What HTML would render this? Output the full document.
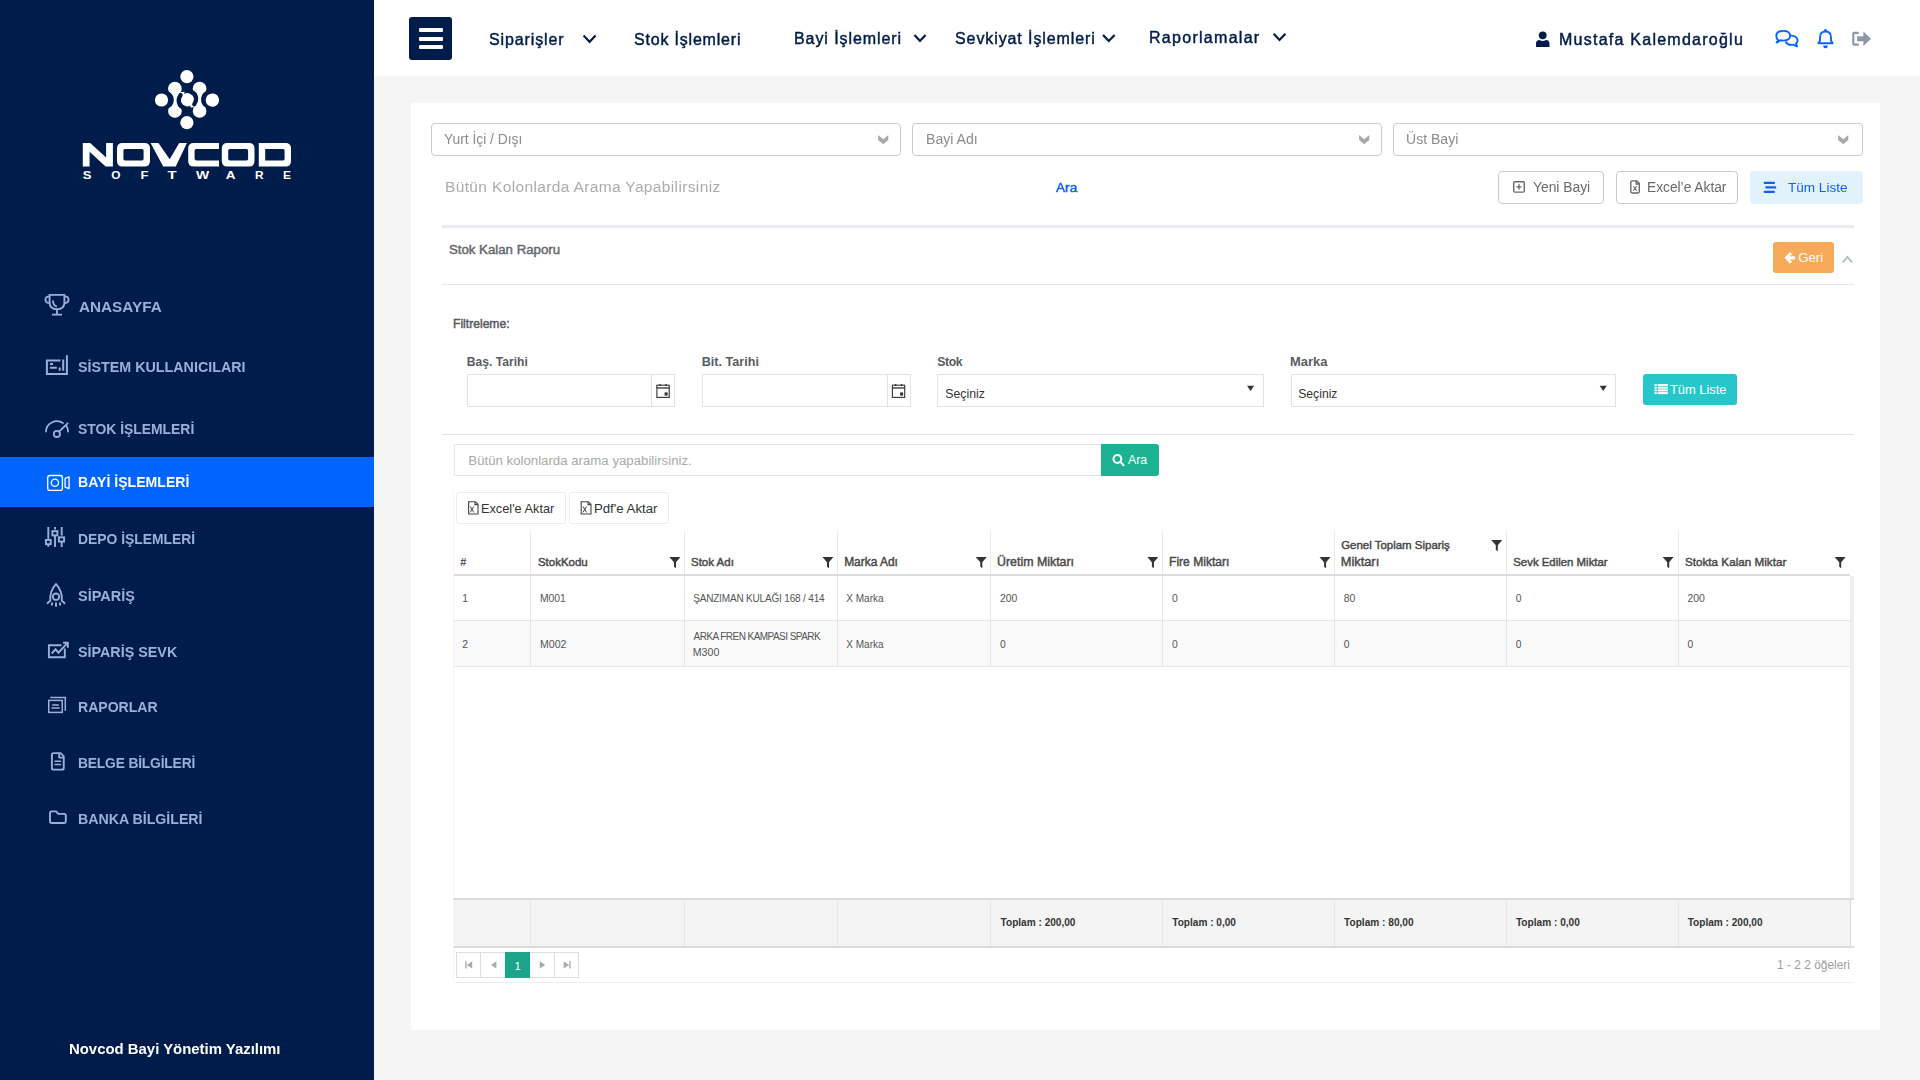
<!DOCTYPE html>
<html lang="tr">
<head>
<meta charset="utf-8">
<title>Stok Kalan Raporu</title>
<style>

*{box-sizing:border-box;margin:0;padding:0}
html,body{width:1920px;height:1080px;overflow:hidden}
body{position:relative;background:#f5f5f5;font-family:"Liberation Sans",sans-serif;color:#333}
.a{position:absolute}
.t{position:absolute;white-space:nowrap;line-height:1}
svg{position:absolute;overflow:visible}
</style>
</head>
<body>
<div class="a" style="left:0px;top:0px;width:374px;height:1080px;background:#001c4b"></div>
<div class="a" style="left:0px;top:457px;width:374px;height:50px;background:#0064ff"></div>
<div class="a" style="left:374px;top:0px;width:1546px;height:76px;background:#fff"></div>
<div class="a" style="left:411px;top:103px;width:1469px;height:927px;background:#fff"></div>
<svg style="left:0;top:0" width="374" height="200" viewBox="0 0 374 200">
<g id="mol">
<g fill="#fff">
<circle cx="186.9" cy="76.6" r="6.6"/><circle cx="186.9" cy="122.7" r="6.6"/><circle cx="212.3" cy="100" r="6.6"/>
<circle cx="174.9" cy="88.7" r="6.85"/><circle cx="199.6" cy="88.7" r="6.85"/><circle cx="174.9" cy="110.9" r="6.85"/><circle cx="199.6" cy="110.9" r="6.85"/>
<circle cx="187.4" cy="99.7" r="6.7"/>
<path d="M170 89H179.5V110.5H170Z"/><path d="M204.8 89H195.3V110.5H204.8Z"/>
<path d="M176.5 92.5L184.5 91.8L184 96.5L179.5 98.5Z"/><path d="M198.3 107L190.3 107.6L190.8 102.9L195.3 100.9Z"/>
</g>
<ellipse cx="166.8" cy="100" rx="7" ry="8.5" fill="#001c4b"/><ellipse cx="208" cy="99.4" rx="7" ry="8.5" fill="#001c4b"/>
<circle cx="161.5" cy="100" r="6.6" fill="#fff"/><circle cx="212.3" cy="100" r="6.6" fill="#fff"/>
<g fill="none" stroke="#001c4b" stroke-width="4.2" stroke-linecap="round">
<path d="M180.6 95 Q177 100.5 180 105.2 Q181.5 106.8 183.5 107.3"/>
<path d="M194.2 104.4 Q197.8 98.9 194.8 94.2 Q193.3 92.6 191.3 92.1"/>
</g>
</g>
<g fill="#fff" fill-rule="evenodd">
<path d="M82.8 166.4V143H90.2L106.1 157.6V143H112.9V166.4H105.6L89.6 151.8V166.4Z"/>
<path d="M122.5 143H144.5Q150 143 150 148.5V160.9Q150 166.4 144.5 166.4H122.5Q117 166.4 117 160.9V148.5Q117 143 122.5 143ZM125 149Q123.4 149 123.4 150.6V158.8Q123.4 160.4 125 160.4H142Q143.6 160.4 143.6 158.8V150.6Q143.6 149 142 149Z"/>
<path d="M150.6 143H158.4L169.7 159.2L179.2 143H186.9L175.8 166.4H163.2Z"/>
<path d="M219 143H193.7Q188.2 143 188.2 148.5V160.9Q188.2 166.4 193.7 166.4H219V160.4H196.4Q194.6 160.4 194.6 158.6V150.8Q194.6 149 196.4 149H219Z"/>
<path d="M227.3 143H249Q254.5 143 254.5 148.5V160.9Q254.5 166.4 249 166.4H227.3Q221.8 166.4 221.8 160.9V148.5Q221.8 143 227.3 143ZM229.8 149Q228.2 149 228.2 150.6V158.8Q228.2 160.4 229.8 160.4H246.5Q248.1 160.4 248.1 158.8V150.6Q248.1 149 246.5 149Z"/>
<path d="M258.8 143H285.5Q291 143 291 148.5V160.9Q291 166.4 285.5 166.4H258.8ZM265.2 149V160.4H283Q284.6 160.4 284.6 158.8V150.6Q284.6 149 283 149Z"/>
</g>
<g fill="#fff" font-family="Liberation Sans" font-weight="bold" font-size="10">
<text x="82.8" y="179" textLength="8.7" lengthAdjust="spacingAndGlyphs">S</text>
<text x="111.2" y="179" textLength="9.2" lengthAdjust="spacingAndGlyphs">O</text>
<text x="140.5" y="179" textLength="8" lengthAdjust="spacingAndGlyphs">F</text>
<text x="167.4" y="179" textLength="9.1" lengthAdjust="spacingAndGlyphs">T</text>
<text x="196" y="179" textLength="13.2" lengthAdjust="spacingAndGlyphs">W</text>
<text x="225.8" y="179" textLength="9.8" lengthAdjust="spacingAndGlyphs">A</text>
<text x="255" y="179" textLength="8.6" lengthAdjust="spacingAndGlyphs">R</text>
<text x="283.1" y="179" textLength="8" lengthAdjust="spacingAndGlyphs">E</text>
</g>
</svg>
<svg style="left:0;top:280px" width="80" height="560" viewBox="0 280 80 560">
<g fill="none" stroke="#9bb0d8" stroke-width="1.85" stroke-linecap="butt" stroke-linejoin="miter">
<!-- trophy -->
<path d="M49.6 294.8H64.4V302.5Q64.4 309.2 57 309.2Q49.6 309.2 49.6 302.5Z"/>
<path d="M49.6 296.3Q45.4 296.3 45.4 299.6Q45.4 303 49.8 303.2"/><path d="M64.4 296.3Q68.6 296.3 68.6 299.6Q68.6 303 64.2 303.2"/>
<path d="M57 309.2V314.6M52 314.6H62"/><path d="M53 300.5Q53 305.5 56.8 306.7"/>
</g>
<g fill="none" stroke="#9bb0d8" stroke-width="2">
<!-- sistem kullanicilari -->
<path d="M60.4 360.4H46.9V374H66.9V355.3"/><path d="M63.2 359.6V370.8M59.7 367.4V370.8M50 363.9H53M50 367.8H56.8"/>
</g>
<g fill="none" stroke="#9bb0d8" stroke-width="1.8" stroke-linecap="round">
<!-- gauge -->
<path d="M46 431.5A11 10.4 0 0 1 63 423"/><path d="M66.4 425.7A11 10.4 0 0 1 68 431.5"/>
<circle cx="56.9" cy="433.9" r="3.1"/><path d="M59.1 431.7L67.6 423.3"/>
</g>
<g fill="none" stroke="#fff" stroke-width="1.3">
<!-- camera -->
<rect x="47.7" y="475.5" width="14.7" height="14.9" rx="2.2"/><circle cx="54.9" cy="482.7" r="3.6"/>
<path d="M65.1 478.4L69.1 476.9V488.7L65.1 487.2Z" stroke-linejoin="round"/>
</g>
<g fill="none" stroke="#9bb0d8" stroke-width="1.9">
<!-- sliders -->
<path d="M48.3 527V538.7M48.3 545V546.8M55 527V529.5M55 536V546.9M61.7 527V535.5M61.7 542V546.9"/>
<rect x="45.9" y="539.9" width="4.8" height="4.3"/><rect x="52.4" y="531.1" width="5" height="4.3"/><rect x="58.9" y="537.3" width="5.2" height="4.3"/>
</g>
<g fill="none" stroke="#9bb0d8" stroke-width="1.9">
<!-- rocket -->
<path d="M47 603.8L50.3 600.6Q49.5 591 56 584.2Q62.5 591 61.8 600.6L65.1 603.8"/>
<circle cx="56" cy="596.7" r="3.2"/>
<path d="M52 602.4V605.6M56 602.6V606.8M60 602.4V605.6"/>
</g>
<g fill="none" stroke="#9bb0d8" stroke-width="1.9">
<!-- chart -->
<path d="M61.4 645.3H48.9V657.3H64.8V648.5"/>
<path d="M51.7 653.5L55.6 649.3L58.4 652.7L67.3 643.2"/><path d="M63.1 642.7H67.8V647.7"/>
</g>
<g fill="none" stroke="#9bb0d8" stroke-width="1.5">
<!-- raporlar -->
<path d="M50.3 697.4H65.3V710.7"/><rect x="48.75" y="700.4" width="13.5" height="12"/>
<path d="M52.2 705H58.9M51.4 708H59.7"/>
</g>
<g fill="none" stroke="#9bb0d8" stroke-width="1.9" stroke-linejoin="round">
<!-- belge -->
<path d="M60.6 753.1H53.6Q51.9 753.1 51.9 754.8V767.9Q51.9 769.6 53.6 769.6H62Q63.75 769.6 63.75 767.9V756.3Z"/>
<path d="M59.2 753.2V757.6H63.6"/><path d="M54.4 761.3H61.1M54.4 764.5H61.1" stroke-width="1.5"/>
</g>
<g fill="none" stroke="#9bb0d8" stroke-width="1.9" stroke-linejoin="round">
<!-- folder -->
<path d="M50 813.2Q50 811.4 51.8 811.4H56.1L58.3 813.9H64Q65.8 813.9 65.8 815.7V821.2Q65.8 823 64 823H51.8Q50 823 50 821.2Z"/>
</g>
</svg>
<div class="a" style="left:409px;top:17px;width:43px;height:43px;background:#001c4b;border-radius:3px"></div>
<div class="a" style="left:419px;top:28px;width:24px;height:4px;background:#fff;border-radius:1px"></div>
<div class="a" style="left:419px;top:36.5px;width:24px;height:4.0px;background:#fff;border-radius:1px"></div>
<div class="a" style="left:419px;top:45px;width:24px;height:4px;background:#fff;border-radius:1px"></div>
<svg style="left:0;top:0" width="1920" height="76" viewBox="0 0 1920 76">
<g fill="none" stroke="#001c4b" stroke-width="2.2" stroke-linecap="square">
<path d="M584.4 36.4L589.6 41.8L594.8 36.4"/>
<path d="M915.2 35.7L920 40.9L924.8 35.7"/>
<path d="M1103.8 35.7L1108.8 40.9L1113.8 35.7"/>
<path d="M1274.4 34.6L1279.5 39.9L1284.6 34.6"/>
</g>
<g fill="#001c4b">
<circle cx="1542.7" cy="35.3" r="3.9"/>
<path d="M1536 46.9V43.8Q1536 40.1 1539.6 40.1Q1541 41 1542.7 41Q1544.4 41 1545.9 40.1Q1549.5 40.1 1549.5 43.8V46.9Z"/>
</g>
<g fill="none" stroke="#0d62ff" stroke-width="1.9" stroke-linejoin="round">
<path d="M1778.2 40.2Q1776.3 38.5 1776.3 35.8Q1776.3 30.9 1783.2 30.9Q1790.1 30.9 1790.1 35.8Q1790.1 40.6 1783.2 40.6Q1781.8 40.6 1780.5 40.3L1776.6 42.6Z"/>
<path d="M1790.3 35.4Q1797.6 36 1797.6 40.6Q1797.6 42.4 1796 43.5L1797 46.4L1793.2 44.7Q1792.3 44.9 1791.2 44.9Q1787.6 44.9 1785.6 41.9"/>
<path d="M1825.5 31.5Q1820 31.5 1820 37.5V40.5L1818.4 43.3H1832.6L1831 40.5V37.5Q1831 31.5 1825.5 31.5Z"/>
</g>
<g fill="#0d62ff"><circle cx="1825.5" cy="30.2" r="1.3"/><path d="M1823 45.6H1828Q1827.6 48.3 1825.5 48.3Q1823.4 48.3 1823 45.6Z"/></g>
<g fill="#8e97a8">
<path d="M1858.8 31.7H1854.2Q1852.2 31.7 1852.2 33.7V43.8Q1852.2 45.8 1854.2 45.8H1858.8V43.6H1854.4V33.9H1858.8Z"/>
<path d="M1857.1 36.3H1863.4V31.5L1870.9 38.8L1863.4 46.1V41.2H1857.1Z"/>
</g>
</svg>
<div class="a" style="left:431px;top:123px;width:470px;height:33px;border:1px solid #cbcbcb;border-radius:4px;background:#fff"></div>
<div class="a" style="left:912px;top:123px;width:470px;height:33px;border:1px solid #cbcbcb;border-radius:4px;background:#fff"></div>
<div class="a" style="left:1393px;top:123px;width:470px;height:33px;border:1px solid #cbcbcb;border-radius:4px;background:#fff"></div>
<svg style="left:0;top:0" width="1920" height="300" viewBox="0 0 1920 300"><g fill="#a9a9a9"><path d="M878.1 135L883.2 139.2L888.3000000000001 135V140L883.2 144.2L878.1 140Z"/><path d="M1359.1 135L1364.1999999999998 139.2L1369.3 135V140L1364.1999999999998 144.2L1359.1 140Z"/><path d="M1838.1 135L1843.1999999999998 139.2L1848.3 135V140L1843.1999999999998 144.2L1838.1 140Z"/></g></svg>
<div class="a" style="left:1498px;top:171px;width:106px;height:33px;border:1px solid #c9c9c9;border-radius:4px"></div>
<div class="a" style="left:1616px;top:171px;width:122px;height:33px;border:1px solid #c9c9c9;border-radius:4px"></div>
<div class="a" style="left:1750px;top:171px;width:113px;height:33px;background:#e1f2fc;border-radius:4px"></div>
<svg style="left:0;top:0" width="1920" height="300" viewBox="0 0 1920 300">
<g fill="none" stroke="#6a6a6a" stroke-width="1.4">
<rect x="1513.7" y="181.7" width="10.6" height="10.4" rx="1"/><path d="M1519 184.3V189.5M1516.4 186.9H1521.6"/>
<path d="M1636.7 180.9H1632.2Q1630.8 180.9 1630.8 182.3V191.6Q1630.8 193 1632.2 193H1637.8Q1639.3 193 1639.3 191.6V183.4Z"/><path d="M1636.2 181V184H1639.2"/>
<path d="M1633.4 186.2L1636.6 190.6M1636.6 186.2L1633.4 190.6" stroke-width="1.1"/>
</g>
<g fill="#1160fb">
<rect x="1763.8" y="181.8" width="11" height="2.2" rx="0.5"/><rect x="1765.4" y="186.3" width="10.8" height="2.2" rx="0.5"/><rect x="1763.8" y="190.7" width="11" height="2.2" rx="0.5"/>
</g>
</svg>
<div class="a" style="left:442px;top:225px;width:1412px;height:3px;background:#e8ecf1"></div>
<div class="a" style="left:442px;top:284px;width:1412px;height:1px;background:#e6e6e6"></div>
<div class="a" style="left:1773px;top:241.5px;width:61px;height:31.5px;background:#f6aa58;border-radius:3px"></div>
<svg style="left:0;top:0" width="1920" height="600" viewBox="0 0 1920 600">
<g fill="#fff"><path d="M1784.4 257.8L1790 252L1792.3 254.2L1789.4 256.3H1795V259.4H1789.4L1792.3 261.5L1790 263.7Z"/></g>
<path d="M1842.8 262.4L1847.4 257L1852 262.4" fill="none" stroke="#b8bec6" stroke-width="1.9"/>
</g>
</svg>
<div class="a" style="left:467px;top:374px;width:208px;height:33px;border:1px solid #e2e2e2"></div>
<div class="a" style="left:650.5px;top:374px;width:1.0px;height:33px;background:#e2e2e2"></div>
<div class="a" style="left:702px;top:374px;width:208.5px;height:33px;border:1px solid #e2e2e2"></div>
<div class="a" style="left:886.5px;top:374px;width:1.0px;height:33px;background:#e2e2e2"></div>
<div class="a" style="left:937px;top:374px;width:326.5px;height:33px;border:1px solid #e2e2e2"></div>
<div class="a" style="left:1290.5px;top:374px;width:325.0px;height:33px;border:1px solid #e2e2e2"></div>
<div class="a" style="left:1643px;top:374px;width:94px;height:31px;background:#26c6ca;border-radius:3px"></div>
<svg style="left:0;top:0" width="1920" height="600" viewBox="0 0 1920 600">
<g fill="none" stroke="#333" stroke-width="1.1">
<rect x="656.9" y="385.2" width="12.3" height="12.2"/><rect x="892.4" y="385.2" width="12.3" height="12.2"/>
</g>
<g fill="#333">
<rect x="656.6" y="387.3" width="13" height="1.3"/><rect x="892.1" y="387.3" width="13" height="1.3"/>
<rect x="659.4" y="384" width="1.4" height="2"/><rect x="665.4" y="384" width="1.4" height="2"/>
<rect x="894.9" y="384" width="1.4" height="2"/><rect x="900.9" y="384" width="1.4" height="2"/>
<rect x="664.6" y="392.4" width="3" height="3.2"/><rect x="900.1" y="392.4" width="3" height="3.2"/>
<path d="M1247 385.8H1254.1L1250.55 391.1Z"/><path d="M1599.7 385.8H1606.8L1603.25 391.1Z"/>
</g>
<g fill="#fff">
<rect x="1654.5" y="384" width="2.2" height="2"/><rect x="1657.6" y="384" width="10.2" height="2"/>
<rect x="1654.5" y="386.7" width="2.2" height="2"/><rect x="1657.6" y="386.7" width="10.2" height="2"/>
<rect x="1654.5" y="389.4" width="2.2" height="2"/><rect x="1657.6" y="389.4" width="10.2" height="2"/>
<rect x="1654.5" y="392.1" width="2.2" height="2"/><rect x="1657.6" y="392.1" width="10.2" height="2"/>
</g>
</svg>
<div class="a" style="left:442px;top:434px;width:1412px;height:1px;background:#e4e4e4"></div>
<div class="a" style="left:453px;top:489px;width:1px;height:493px;background:#f5f5f5"></div>
<div class="a" style="left:454px;top:444px;width:647px;height:31.5px;border:1px solid #e6e6e6;border-right:none"></div>
<div class="a" style="left:1101px;top:444px;width:58px;height:31.5px;background:#1bb394;border-radius:0 3px 3px 0"></div>
<div class="a" style="left:456px;top:492px;width:109.5px;height:31.5px;border:1px solid #ebebeb;border-radius:3px"></div>
<div class="a" style="left:569px;top:492px;width:99.5px;height:31.5px;border:1px solid #ebebeb;border-radius:3px"></div>
<svg style="left:0;top:0" width="1920" height="600" viewBox="0 0 1920 600">
<g fill="none" stroke="#fff" stroke-width="2">
<circle cx="1117.4" cy="459" r="3.9"/><path d="M1120.3 461.9L1123.6 465.2" stroke-linecap="round"/>
</g>
<g fill="none" stroke="#444" stroke-width="1.1">
<path d="M475.3 501.8H468.6V514H478V504.3Z"/><path d="M475 501.9V504.6H477.8"/>
<path d="M470.2 506.5L473.8 512.4M473.8 506.5L470.2 512.4" stroke-width="1"/>
<path d="M588.3 501.8H581.2V514H591V504.3Z"/><path d="M588 501.9V504.6H590.8"/>
<path d="M583 506.5L586.6 512.4M586.6 506.5L583 512.4" stroke-width="1"/>
</g>
</svg>
<div class="a" style="left:530px;top:531px;width:1px;height:43px;background:#e8e8e8"></div>
<div class="a" style="left:684px;top:531px;width:1px;height:43px;background:#e8e8e8"></div>
<div class="a" style="left:837px;top:531px;width:1px;height:43px;background:#e8e8e8"></div>
<div class="a" style="left:990px;top:531px;width:1px;height:43px;background:#e8e8e8"></div>
<div class="a" style="left:1162px;top:531px;width:1px;height:43px;background:#e8e8e8"></div>
<div class="a" style="left:1334px;top:531px;width:1px;height:43px;background:#e8e8e8"></div>
<div class="a" style="left:1506px;top:531px;width:1px;height:43px;background:#e8e8e8"></div>
<div class="a" style="left:1678px;top:531px;width:1px;height:43px;background:#e8e8e8"></div>
<div class="a" style="left:454px;top:573.5px;width:1396px;height:2.0px;background:#dcdcdc"></div>
<div class="a" style="left:454px;top:621px;width:1396px;height:45px;background:#f9f9f9"></div>
<div class="a" style="left:454px;top:620px;width:1396px;height:1px;background:#e6e6e6"></div>
<div class="a" style="left:454px;top:666px;width:1396px;height:1px;background:#e6e6e6"></div>
<div class="a" style="left:530px;top:575.5px;width:1px;height:91.0px;background:#e6e6e6"></div>
<div class="a" style="left:684px;top:575.5px;width:1px;height:91.0px;background:#e6e6e6"></div>
<div class="a" style="left:837px;top:575.5px;width:1px;height:91.0px;background:#e6e6e6"></div>
<div class="a" style="left:990px;top:575.5px;width:1px;height:91.0px;background:#e6e6e6"></div>
<div class="a" style="left:1162px;top:575.5px;width:1px;height:91.0px;background:#e6e6e6"></div>
<div class="a" style="left:1334px;top:575.5px;width:1px;height:91.0px;background:#e6e6e6"></div>
<div class="a" style="left:1506px;top:575.5px;width:1px;height:91.0px;background:#e6e6e6"></div>
<div class="a" style="left:1678px;top:575.5px;width:1px;height:91.0px;background:#e6e6e6"></div>
<div class="a" style="left:1850px;top:575.5px;width:4px;height:322.5px;background:#efefef"></div>
<div class="a" style="left:454px;top:898px;width:1400px;height:2px;background:#dadada"></div>
<div class="a" style="left:454px;top:900px;width:1396px;height:45.5px;background:#f4f4f4"></div>
<div class="a" style="left:1850px;top:900px;width:1px;height:45.5px;background:#d8d8d8"></div>
<div class="a" style="left:530px;top:900px;width:1px;height:45.5px;background:#e6e6e6"></div>
<div class="a" style="left:684px;top:900px;width:1px;height:45.5px;background:#e6e6e6"></div>
<div class="a" style="left:837px;top:900px;width:1px;height:45.5px;background:#e6e6e6"></div>
<div class="a" style="left:990px;top:900px;width:1px;height:45.5px;background:#e6e6e6"></div>
<div class="a" style="left:1162px;top:900px;width:1px;height:45.5px;background:#e6e6e6"></div>
<div class="a" style="left:1334px;top:900px;width:1px;height:45.5px;background:#e6e6e6"></div>
<div class="a" style="left:1506px;top:900px;width:1px;height:45.5px;background:#e6e6e6"></div>
<div class="a" style="left:1678px;top:900px;width:1px;height:45.5px;background:#e6e6e6"></div>
<div class="a" style="left:454px;top:945.5px;width:1400px;height:2.0px;background:#dadada"></div>
<div class="a" style="left:454px;top:982px;width:1400px;height:1px;background:#efefef"></div>
<div class="a" style="left:456px;top:952px;width:123px;height:26px;border:1px solid #dedede"></div>
<div class="a" style="left:480px;top:952px;width:1px;height:26px;background:#dedede"></div>
<div class="a" style="left:554px;top:952px;width:1px;height:26px;background:#dedede"></div>
<div class="a" style="left:505px;top:952px;width:25px;height:26px;background:#1aa58a"></div>
<svg style="left:0;top:0" width="1920" height="1000" viewBox="0 0 1920 1000"><g fill="#333"><path d="M669.4 557H680.4L676.0 562.2V568.2L674.0 566.8V562.2Z"/><path d="M822.4 557H833.4L829.0 562.2V568.2L827.0 566.8V562.2Z"/><path d="M975.7 557H986.7L982.3000000000001 562.2V568.2L980.3000000000001 566.8V562.2Z"/><path d="M1147.3 557H1158.3L1153.8999999999999 562.2V568.2L1151.8999999999999 566.8V562.2Z"/><path d="M1319.5 557H1330.5L1326.1 562.2V568.2L1324.1 566.8V562.2Z"/><path d="M1491.2 540H1502.2L1497.8 545.2V551.2L1495.8 549.8V545.2Z"/><path d="M1662.6 557H1673.6L1669.1999999999998 562.2V568.2L1667.1999999999998 566.8V562.2Z"/><path d="M1834.6 557H1845.6L1841.1999999999998 562.2V568.2L1839.1999999999998 566.8V562.2Z"/></g><g fill="#aaaaaa"><path d="M465.2 961.2H466.6V968.6H465.2Z"/><path d="M472.2 961.2V968.6L466.8 964.9Z"/><path d="M496.4 961.2V968.6L491 964.9Z"/><path d="M539.8 961.2V968.6L545.2 964.9Z"/><path d="M563.6 961.2V968.6L569 964.9Z"/><path d="M569.2 961.2H570.6V968.6H569.2Z"/></g></svg>

<!-- texts -->
<div class="t" style="left:78.72px;top:299.36px;font-size:15.29px;letter-spacing:0.003px;font-weight:bold;color:#9bb0d8;will-change:transform;">ANASAYFA</div>
<div class="t" style="left:77.67px;top:360.35px;font-size:14.31px;letter-spacing:-0.003px;font-weight:bold;color:#9bb0d8;will-change:transform;">SİSTEM KULLANICILARI</div>
<div class="t" style="left:77.58px;top:422.55px;font-size:13.90px;letter-spacing:-0.002px;font-weight:bold;color:#9bb0d8;will-change:transform;">STOK İŞLEMLERİ</div>
<div class="t" style="left:77.58px;top:475.46px;font-size:14.08px;letter-spacing:0.002px;font-weight:bold;color:#ffffff;will-change:transform;">BAYİ İŞLEMLERİ</div>
<div class="t" style="left:77.70px;top:532.56px;font-size:13.88px;letter-spacing:-0.001px;font-weight:bold;color:#9bb0d8;will-change:transform;">DEPO İŞLEMLERİ</div>
<div class="t" style="left:77.67px;top:589.26px;font-size:14.48px;letter-spacing:0.001px;font-weight:bold;color:#9bb0d8;will-change:transform;">SİPARİŞ</div>
<div class="t" style="left:77.57px;top:645.33px;font-size:14.34px;letter-spacing:-0.003px;font-weight:bold;color:#9bb0d8;will-change:transform;">SİPARİŞ SEVK</div>
<div class="t" style="left:77.69px;top:700.47px;font-size:14.07px;letter-spacing:-0.002px;font-weight:bold;color:#9bb0d8;will-change:transform;">RAPORLAR</div>
<div class="t" style="left:77.70px;top:757.10px;font-size:13.80px;letter-spacing:-0.163px;font-weight:bold;color:#9bb0d8;will-change:transform;">BELGE BİLGİLERİ</div>
<div class="t" style="left:77.68px;top:812.41px;font-size:14.17px;letter-spacing:0.001px;font-weight:bold;color:#9bb0d8;will-change:transform;">BANKA BİLGİLERİ</div>
<div class="t" style="left:68.53px;top:1042.05px;font-size:14.91px;letter-spacing:-0.002px;font-weight:bold;color:#ffffff;will-change:transform;">Novcod Bayi Yönetim Yazılımı</div>
<div class="t" style="left:488.78px;top:32.00px;font-size:16.00px;letter-spacing:0.880px;font-weight:normal;color:#001c4b;will-change:transform;-webkit-text-stroke:0.45px #001c4b;">Siparişler</div>
<div class="t" style="left:633.88px;top:32.00px;font-size:16.00px;letter-spacing:0.805px;font-weight:normal;color:#001c4b;will-change:transform;-webkit-text-stroke:0.45px #001c4b;">Stok İşlemleri</div>
<div class="t" style="left:794.22px;top:31.00px;font-size:16.00px;letter-spacing:0.923px;font-weight:normal;color:#001c4b;will-change:transform;-webkit-text-stroke:0.45px #001c4b;">Bayi İşlemleri</div>
<div class="t" style="left:954.68px;top:31.00px;font-size:16.00px;letter-spacing:0.905px;font-weight:normal;color:#001c4b;will-change:transform;-webkit-text-stroke:0.45px #001c4b;">Sevkiyat İşlemleri</div>
<div class="t" style="left:1149.42px;top:30.00px;font-size:16.00px;letter-spacing:1.284px;font-weight:normal;color:#001c4b;will-change:transform;-webkit-text-stroke:0.45px #001c4b;">Raporlamalar</div>
<div class="t" style="left:1559.22px;top:32.00px;font-size:16.00px;letter-spacing:1.249px;font-weight:normal;color:#001c4b;will-change:transform;-webkit-text-stroke:0.45px #001c4b;">Mustafa Kalemdaroğlu</div>
<div class="t" style="left:443.55px;top:132.58px;font-size:13.84px;letter-spacing:-0.001px;font-weight:normal;color:#8c8c8c;will-change:transform;">Yurt İçi / Dışı</div>
<div class="t" style="left:925.77px;top:132.44px;font-size:14.12px;letter-spacing:0.000px;font-weight:normal;color:#8c8c8c;will-change:transform;">Bayi Adı</div>
<div class="t" style="left:1406.35px;top:132.47px;font-size:14.05px;letter-spacing:0.000px;font-weight:normal;color:#8c8c8c;will-change:transform;">Üst Bayi</div>
<div class="t" style="left:444.66px;top:179.25px;font-size:15.50px;letter-spacing:0.360px;font-weight:normal;color:#ababab;will-change:transform;">Bütün Kolonlarda Arama Yapabilirsiniz</div>
<div class="t" style="left:1055.90px;top:181.19px;font-size:13.63px;letter-spacing:0.003px;font-weight:normal;color:#1160fb;will-change:transform;-webkit-text-stroke:0.45px #1160fb;">Ara</div>
<div class="t" style="left:1533.25px;top:180.58px;font-size:13.84px;letter-spacing:-0.002px;font-weight:normal;color:#6a6a6a;will-change:transform;">Yeni Bayi</div>
<div class="t" style="left:1646.70px;top:181.10px;font-size:13.80px;letter-spacing:-0.024px;font-weight:normal;color:#6a6a6a;will-change:transform;">Excel’e Aktar</div>
<div class="t" style="left:1787.93px;top:181.22px;font-size:13.55px;letter-spacing:-0.000px;font-weight:normal;color:#1160fb;will-change:transform;">Tüm Liste</div>
<div class="t" style="left:448.90px;top:243.38px;font-size:13.25px;letter-spacing:0.001px;font-weight:normal;color:#66666c;-webkit-text-stroke:0.45px #66666c;">Stok Kalan Raporu</div>
<div class="t" style="left:1798.24px;top:251.42px;font-size:13.16px;letter-spacing:0.002px;font-weight:normal;color:#ffffff;">Geri</div>
<div class="t" style="left:453.03px;top:318.44px;font-size:12.12px;letter-spacing:0.002px;font-weight:normal;color:#575962;-webkit-text-stroke:0.45px #575962;">Filtreleme:</div>
<div class="t" style="left:466.81px;top:356.44px;font-size:12.11px;letter-spacing:0.000px;font-weight:bold;color:#5b5b63;">Baş. Tarihi</div>
<div class="t" style="left:701.78px;top:356.20px;font-size:12.60px;letter-spacing:-0.000px;font-weight:bold;color:#5b5b63;">Bit. Tarihi</div>
<div class="t" style="left:937.33px;top:356.35px;font-size:12.30px;letter-spacing:-0.454px;font-weight:bold;color:#5b5b63;">Stok</div>
<div class="t" style="left:1290.06px;top:355.55px;font-size:12.91px;letter-spacing:0.000px;font-weight:bold;color:#5b5b63;">Marka</div>
<div class="t" style="left:945.25px;top:388.35px;font-size:12.30px;letter-spacing:0.000px;font-weight:normal;color:#333333;">Seçiniz</div>
<div class="t" style="left:1298.25px;top:388.42px;font-size:12.17px;letter-spacing:0.001px;font-weight:normal;color:#333333;">Seçiniz</div>
<div class="t" style="left:1669.94px;top:383.55px;font-size:12.90px;letter-spacing:0.001px;font-weight:normal;color:#ffffff;">Tüm Liste</div>
<div class="t" style="left:468.34px;top:454.38px;font-size:13.23px;letter-spacing:0.001px;font-weight:normal;color:#a9a9a9;">Bütün kolonlarda arama yapabilirsiniz.</div>
<div class="t" style="left:1128.00px;top:454.32px;font-size:12.35px;letter-spacing:-0.002px;font-weight:normal;color:#ffffff;">Ara</div>
<div class="t" style="left:480.98px;top:502.62px;font-size:12.76px;letter-spacing:0.001px;font-weight:normal;color:#333333;">Excel&#x27;e Aktar</div>
<div class="t" style="left:593.94px;top:502.39px;font-size:13.22px;letter-spacing:-0.000px;font-weight:normal;color:#333333;">Pdf&#x27;e Aktar</div>
<div class="t" style="left:460.33px;top:557.00px;font-size:11.00px;letter-spacing:0.000px;font-weight:bold;color:#555555;">#</div>
<div class="t" style="left:537.88px;top:556.75px;font-size:11.50px;letter-spacing:0.002px;font-weight:normal;color:#4a4a4a;-webkit-text-stroke:0.45px #4a4a4a;">StokKodu</div>
<div class="t" style="left:690.98px;top:556.74px;font-size:11.52px;letter-spacing:0.000px;font-weight:normal;color:#4a4a4a;-webkit-text-stroke:0.45px #4a4a4a;">Stok Adı</div>
<div class="t" style="left:844.14px;top:556.53px;font-size:11.94px;letter-spacing:-0.000px;font-weight:normal;color:#4a4a4a;-webkit-text-stroke:0.45px #4a4a4a;">Marka Adı</div>
<div class="t" style="left:997.07px;top:556.30px;font-size:12.39px;letter-spacing:-0.002px;font-weight:normal;color:#4a4a4a;-webkit-text-stroke:0.45px #4a4a4a;">Üretim Miktarı</div>
<div class="t" style="left:1169.03px;top:556.47px;font-size:12.07px;letter-spacing:0.001px;font-weight:normal;color:#4a4a4a;-webkit-text-stroke:0.45px #4a4a4a;">Fire Miktarı</div>
<div class="t" style="left:1341.18px;top:539.77px;font-size:11.46px;letter-spacing:0.001px;font-weight:normal;color:#4a4a4a;-webkit-text-stroke:0.45px #4a4a4a;">Genel Toplam Sipariş</div>
<div class="t" style="left:1340.72px;top:555.59px;font-size:12.83px;letter-spacing:0.001px;font-weight:normal;color:#4a4a4a;-webkit-text-stroke:0.45px #4a4a4a;">Miktarı</div>
<div class="t" style="left:1513.24px;top:556.79px;font-size:11.41px;letter-spacing:-0.002px;font-weight:normal;color:#4a4a4a;-webkit-text-stroke:0.45px #4a4a4a;">Sevk Edilen Miktar</div>
<div class="t" style="left:1684.97px;top:556.15px;font-size:11.70px;letter-spacing:0.001px;font-weight:normal;color:#4a4a4a;-webkit-text-stroke:0.45px #4a4a4a;">Stokta Kalan Miktar</div>
<div class="t" style="left:462.23px;top:593.85px;font-size:10.30px;letter-spacing:0.000px;font-weight:normal;color:#555555;">1</div>
<div class="t" style="left:539.97px;top:593.82px;font-size:10.36px;letter-spacing:-0.002px;font-weight:normal;color:#555555;">M001</div>
<div class="t" style="left:693.15px;top:594.00px;font-size:10.00px;letter-spacing:-0.173px;font-weight:normal;color:#555555;">ŞANZIMAN KULAĞI 168 / 414</div>
<div class="t" style="left:846.25px;top:593.98px;font-size:10.04px;letter-spacing:0.000px;font-weight:normal;color:#555555;">X Marka</div>
<div class="t" style="left:999.98px;top:593.78px;font-size:10.44px;letter-spacing:0.002px;font-weight:normal;color:#555555;">200</div>
<div class="t" style="left:1172.09px;top:593.85px;font-size:10.30px;letter-spacing:0.000px;font-weight:normal;color:#555555;">0</div>
<div class="t" style="left:1343.78px;top:593.78px;font-size:10.44px;letter-spacing:-0.003px;font-weight:normal;color:#555555;">80</div>
<div class="t" style="left:1515.84px;top:593.85px;font-size:10.30px;letter-spacing:0.000px;font-weight:normal;color:#555555;">0</div>
<div class="t" style="left:1687.48px;top:593.78px;font-size:10.44px;letter-spacing:0.002px;font-weight:normal;color:#555555;">200</div>
<div class="t" style="left:462.19px;top:639.85px;font-size:10.30px;letter-spacing:0.000px;font-weight:normal;color:#555555;">2</div>
<div class="t" style="left:539.95px;top:639.18px;font-size:10.63px;letter-spacing:0.002px;font-weight:normal;color:#555555;">M002</div>
<div class="t" style="left:693.60px;top:632.00px;font-size:10.00px;letter-spacing:-0.550px;font-weight:normal;color:#555555;">ARKA FREN KAMPASI SPARK</div>
<div class="t" style="left:692.75px;top:647.17px;font-size:10.65px;letter-spacing:-0.000px;font-weight:normal;color:#555555;">M300</div>
<div class="t" style="left:846.25px;top:639.98px;font-size:10.04px;letter-spacing:0.000px;font-weight:normal;color:#555555;">X Marka</div>
<div class="t" style="left:1000.09px;top:639.85px;font-size:10.30px;letter-spacing:0.000px;font-weight:normal;color:#555555;">0</div>
<div class="t" style="left:1172.09px;top:639.85px;font-size:10.30px;letter-spacing:0.000px;font-weight:normal;color:#555555;">0</div>
<div class="t" style="left:1343.84px;top:639.85px;font-size:10.30px;letter-spacing:0.000px;font-weight:normal;color:#555555;">0</div>
<div class="t" style="left:1515.84px;top:639.85px;font-size:10.30px;letter-spacing:0.000px;font-weight:normal;color:#555555;">0</div>
<div class="t" style="left:1687.59px;top:639.85px;font-size:10.30px;letter-spacing:0.000px;font-weight:normal;color:#555555;">0</div>
<div class="t" style="left:1000.60px;top:917.96px;font-size:10.08px;letter-spacing:0.001px;font-weight:bold;color:#333333;">Toplam : 200,00</div>
<div class="t" style="left:1172.30px;top:917.97px;font-size:10.07px;letter-spacing:0.001px;font-weight:bold;color:#333333;">Toplam : 0,00</div>
<div class="t" style="left:1344.10px;top:917.94px;font-size:10.12px;letter-spacing:-0.001px;font-weight:bold;color:#333333;">Toplam : 80,00</div>
<div class="t" style="left:1515.90px;top:917.92px;font-size:10.15px;letter-spacing:0.001px;font-weight:bold;color:#333333;">Toplam : 0,00</div>
<div class="t" style="left:1687.70px;top:917.96px;font-size:10.08px;letter-spacing:0.001px;font-weight:bold;color:#333333;">Toplam : 200,00</div>
<div class="t" style="left:1777.00px;top:959.52px;font-size:11.95px;letter-spacing:-0.000px;font-weight:normal;color:#a0a0a0;">1 - 2 2 öğeleri</div>
<div class="t" style="left:514.44px;top:960.75px;font-size:11.50px;letter-spacing:0.000px;font-weight:normal;color:#ffffff;">1</div>
</body>
</html>
